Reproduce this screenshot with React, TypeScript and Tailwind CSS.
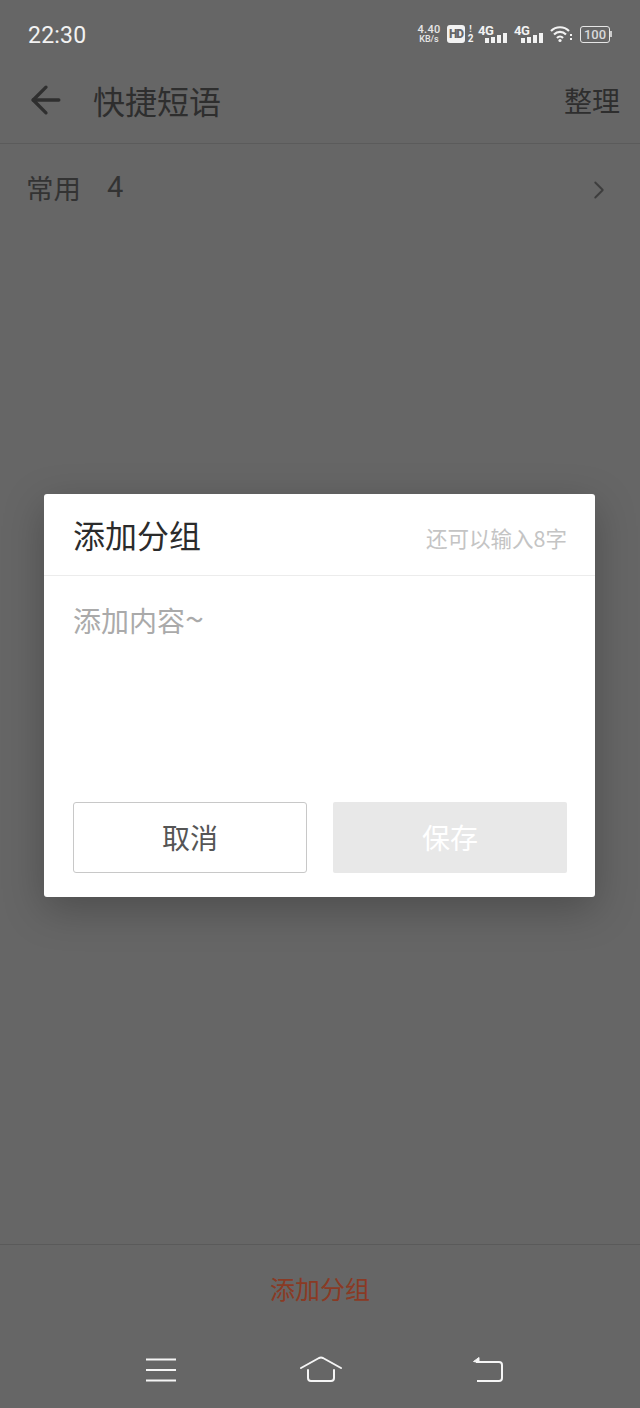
import { ArrowLeft, ChevronRight } from 'lucide-react';

const cjk = { fontFamily: '"Noto Sans CJK SC", "Noto Sans", sans-serif' };

function Signal() {
  return (
    <div className="relative w-[29px] h-[18px]">
      <span className="absolute left-0 -top-[1px] text-[13px] leading-[13px] font-bold tracking-[-0.5px] text-[#f2f2f2]">4G</span>
      <div className="absolute right-0 bottom-0 flex items-end gap-[2px]">
        <span className="w-[4px] h-[5px] bg-[#f2f2f2]" />
        <span className="w-[4px] h-[6px] bg-[#f2f2f2]" />
        <span className="w-[4px] h-[8px] bg-[#f2f2f2]" />
        <span className="w-[4px] h-[10px] bg-[#f2f2f2]" />
      </div>
    </div>
  );
}

function StatusBar() {
  return (
    <div className="h-[70px] pl-[28px] pr-[28px] flex items-center justify-between text-[#f2f2f2]" style={{ fontFamily: '"Roboto", sans-serif' }}>
      <span className="text-[23px] leading-none tracking-[0.2px] mt-[1px]">22:30</span>
      <div className="flex items-center -mt-[2px]">
        <div className="flex flex-col items-center text-[#e6e6e6] leading-none w-[24px] font-medium">
          <span className="text-[11px] leading-[10px] tracking-[0.3px]">4.40</span>
          <span className="text-[9px] leading-[9px]">KB/s</span>
        </div>
        <div className="ml-[6px] w-[18px] h-[18px] rounded-[3px] bg-[#f2f2f2] text-[#666] text-[12px] tracking-[-1px] font-black flex items-center justify-center leading-none">HD</div>
        <div className="ml-[2px] flex flex-col items-center w-[7px] font-bold">
          <span className="text-[9px] leading-[9px]">!</span>
          <span className="text-[10px] leading-[10px]">2</span>
        </div>
        <div className="ml-[4px]"><Signal /></div>
        <div className="ml-[7px]"><Signal /></div>
        <svg className="ml-[7px]" width="22" height="18" viewBox="0 0 22 18" fill="none" stroke="#f2f2f2" strokeWidth="2.2">
          <path d="M1 6 C6 1 14 1 19 6" />
          <path d="M4 9.500 C7.500 6 12.500 6 16 9.500" />
          <path d="M7 13 C8.800 11 11.200 11 13 13" />
          <circle cx="10" cy="15.500" r="1.600" fill="#f2f2f2" stroke="none" />
          <rect x="20" y="9" width="2" height="2" fill="#f2f2f2" stroke="none" />
          <rect x="20" y="13" width="2" height="2" fill="#f2f2f2" stroke="none" />
        </svg>
        <div className="ml-[8px] flex items-center">
          <div className="w-[30px] h-[17px] rounded-[3px] border-[1.5px] border-[#e6e6e6] flex items-center justify-center text-[13px] leading-none font-medium text-[#d9d9d9]">100</div>
          <span className="w-[2px] h-[6px] bg-[#cccccc]" />
        </div>
      </div>
    </div>
  );
}

function BottomNav() {
  return (
    <div className="h-[64px] flex items-start justify-between pl-[145px] pr-[136px] pt-[12px]">
      <svg width="32" height="28" viewBox="0 0 32 28" fill="none" stroke="#f5f5f5" strokeWidth="2">
        <path d="M1 3.500 H31 M1 14 H31 M1 24.500 H31" />
      </svg>
      <svg className="mr-[8px] -mt-[1px]" width="44" height="30" viewBox="0 0 44 30" fill="none" stroke="#f5f5f5" strokeWidth="2" strokeLinecap="round" strokeLinejoin="round">
        <path d="M2 13 L20 3 Q22 2 24 3 L42 13" />
        <path d="M9 15 V23 Q9 26 12 26 H32 Q35 26 35 23 V15" />
      </svg>
      <svg width="32" height="28" viewBox="0 0 32 28" fill="none" stroke="#f5f5f5" strokeWidth="2" strokeLinejoin="round">
        <path d="M4 6 H27 Q30 6 30 9 V22 Q30 25 27 25 H5" />
        <path d="M1.500 5.500 L7 1.500 V6.500 Z" fill="#f5f5f5" strokeWidth="1" />
      </svg>
    </div>
  );
}

export default function App() {
  return (
    <div className="relative w-[640px] h-[1408px] overflow-hidden bg-[#666666] flex flex-col" style={cjk}>
      <StatusBar />

      <div className="h-[74px] flex items-center justify-between pl-[28px] pr-[20px] border-b border-[#5b5b5b] pb-[13px]">
        <div className="flex items-center">
          <ArrowLeft size={44} strokeWidth={1.8} color="#2f2f2f" className="-ml-[4px]" />
          <span className="ml-[25px] text-[32px] leading-none text-[#2e2e2e]">快捷短语</span>
        </div>
        <span className="text-[28px] leading-none text-[#2e2e2e]">整理</span>
      </div>

      <div className="h-[88px] flex items-start justify-between pl-[26px] pr-[26px] pt-[26px]">
        <div className="flex items-center text-[#333333] text-[27.500px] leading-[34px]">
          <span>常用</span>
          <span className="ml-[26px] text-[29px] -mt-[1px]" style={{ fontFamily: '"Roboto", sans-serif' }}>4</span>
        </div>
        <ChevronRight size={30} strokeWidth={1.5} color="#3d3d3d" className="mt-[5px]" />
      </div>

      <div className="flex-1" />

      <div className="h-[100px] border-t border-[#5a5a5a] flex items-center justify-center pb-[12px]">
        <span className="text-[25px] leading-none text-[#8a3a24]">添加分组</span>
      </div>
      <BottomNav />

      <div className="absolute left-[44px] top-[494px] w-[551px] h-[403px] bg-white rounded-[3px] shadow-[0_12px_40px_rgba(0,0,0,0.25)] flex flex-col">
        <div className="h-[82px] flex items-center justify-between pl-[29px] pr-[28px] border-b border-[#ececec]">
          <span className="text-[32px] leading-none text-[#2b2b2b] -mt-[1px]">添加分组</span>
          <span className="text-[21.500px] leading-none text-[#c4c4c4] mt-[7px]">还可以输入8字</span>
        </div>
        <div className="flex-1 pl-[29px] pr-[28px] pt-[25px]">
          <span className="block text-[28px] leading-[34px] text-[#aaaaaa]">添加内容<span className="text-[34px]">~</span></span>
        </div>
        <div className="flex gap-[26px] pl-[29px] pr-[28px] pb-[24px]">
          <button className="w-[234px] h-[71px] rounded-[3px] border border-[#c8c8c8] bg-white text-[28px] leading-none pb-[2px] text-[#555555]">取消</button>
          <button className="w-[234px] h-[71px] rounded-[2px] bg-[#e8e8e8] text-[28px] leading-none pb-[2px] text-white">保存</button>
        </div>
      </div>
    </div>
  );
}
